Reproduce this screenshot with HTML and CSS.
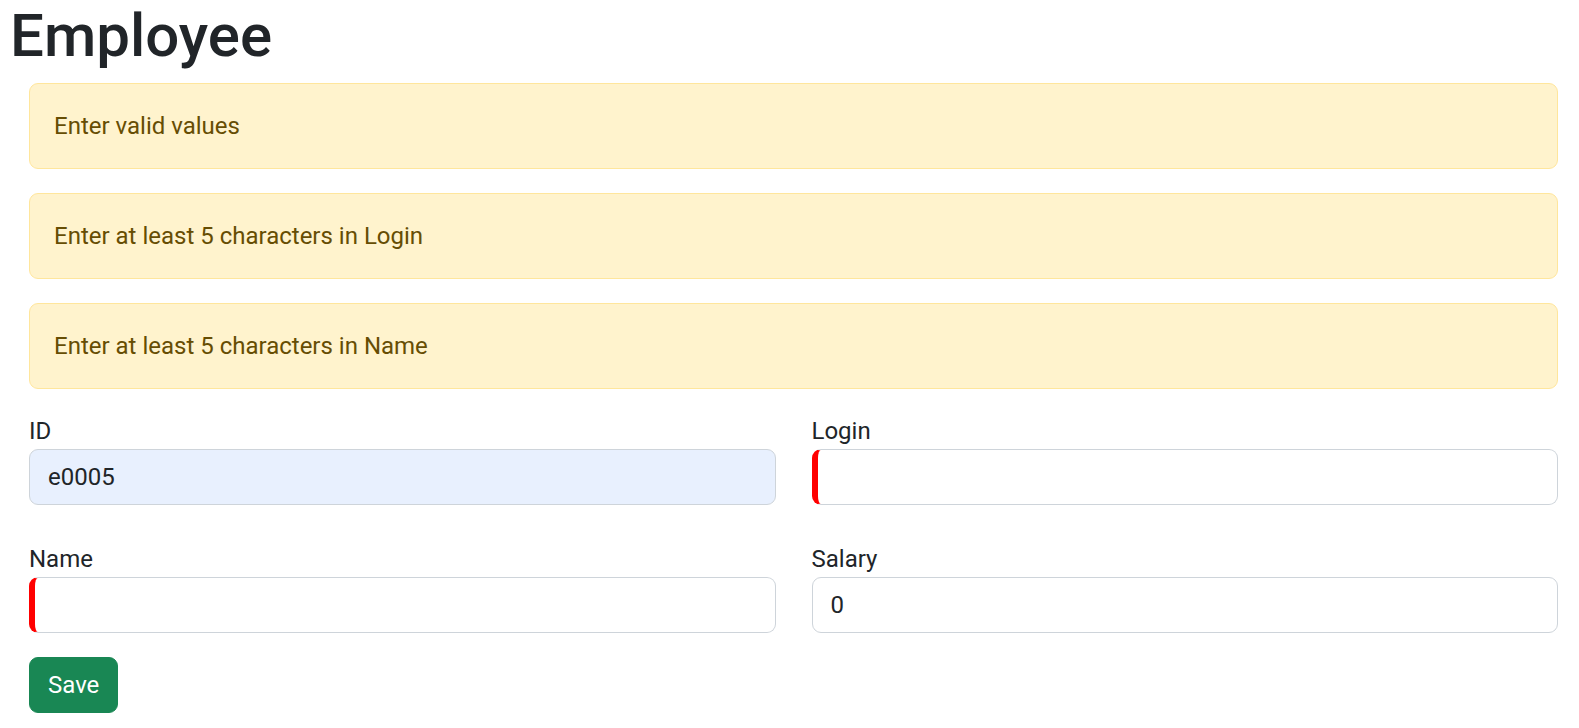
FILE: index.html
```html
<!DOCTYPE html>
<html lang="en">
<head>
<meta charset="utf-8">
<title>Employee</title>
<link rel="stylesheet" href="styles.css">
</head>
<body>
<h1 class="title">Employee</h1>
<div class="content">
  <div class="alert">Enter valid values</div>
  <div class="alert">Enter at least 5 characters in Login</div>
  <div class="alert">Enter at least 5 characters in Name</div>
  <form class="form">
    <div class="grid">
      <div class="field">
        <label class="label" for="id">ID</label>
        <input class="input input-filled" id="id" type="text" value="e0005">
      </div>
      <div class="field">
        <label class="label" for="login">Login</label>
        <input class="input input-invalid" id="login" type="text" value="">
      </div>
      <div class="field">
        <label class="label" for="name">Name</label>
        <input class="input input-invalid" id="name" type="text" value="">
      </div>
      <div class="field">
        <label class="label" for="salary">Salary</label>
        <input class="input" id="salary" type="text" value="0">
      </div>
    </div>
    <button class="btn" type="button">Save</button>
  </form>
</div>
</body>
</html>
```

FILE: styles.css
```css
* { box-sizing: border-box; }
html, body { margin: 0; padding: 0; background: #fff; }
body {
  font-family: Roboto, "Noto Sans", "Liberation Sans", sans-serif;
  font-size: 24px;
  line-height: 1.5;
  color: #212529;
}
.title {
  margin: 0 0 11px 0;
  padding-left: 10px;
  font-size: 60px;
  font-weight: 500;
  line-height: 1.2;
  color: #212529;
}
.content {
  padding: 0 21px 0 29px;
}
.alert {
  background: #fff3cd;
  border: 1px solid #ffe69c;
  color: #664d03;
  border-radius: 9px;
  padding: 24px 24px;
  margin-bottom: 24px;
  line-height: 36px;
}
.grid {
  display: grid;
  grid-template-columns: 1fr 1fr;
  column-gap: 36px;
  row-gap: 36px;
  margin-top: 24px;
}
.field { display: flex; flex-direction: column; }
.label { display: block; line-height: 36px; }
.input {
  display: block;
  width: 100%;
  height: 56px;
  padding: 9px 18px;
  font-family: inherit;
  font-size: 24px;
  line-height: 36px;
  color: #212529;
  background: #fff;
  border: 1px solid #ced4da;
  border-radius: 9px;
  outline: none;
}
.input-filled { background: #e8f0fe; }
.input-invalid { border-left: 6px solid #ff0000; }
.btn {
  display: inline-block;
  margin-top: 24px;
  padding: 9px 18px;
  font-family: inherit;
  font-size: 24px;
  line-height: 36px;
  color: #fff;
  background: #198754;
  border: 1px solid #198754;
  border-radius: 9px;
}
```
